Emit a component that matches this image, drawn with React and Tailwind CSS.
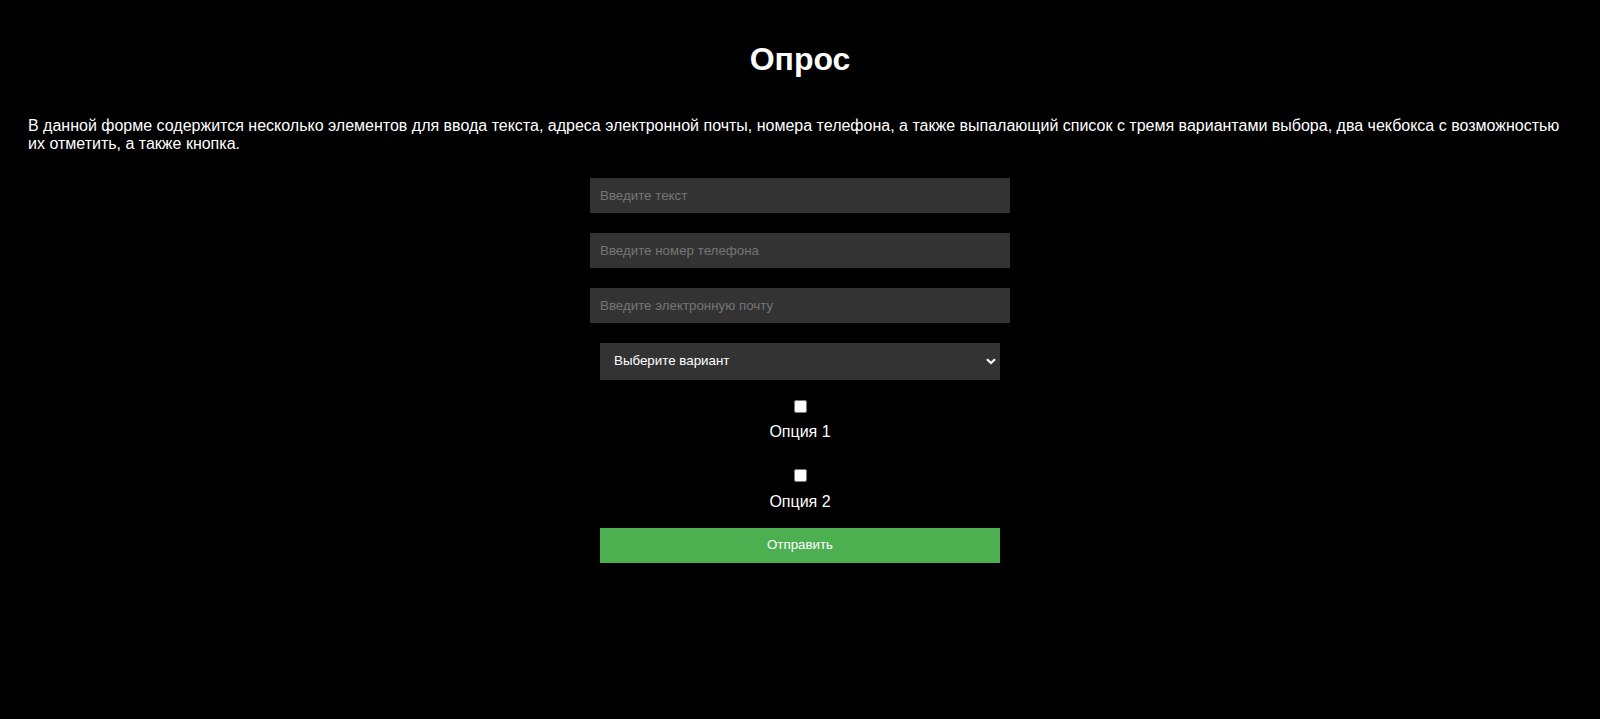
import React from "react";

export default function App() {
  return (
    <div className="min-h-[719px] bg-black text-white px-[28px] pt-[41px] font-['Liberation_Sans',Arial,sans-serif]">
      <h1 className="text-center text-[32px] leading-[37px] font-bold">Опрос</h1>
      <p className="mt-[39px] text-[16px] leading-[18.4px]">
        В данной форме содержится несколько элементов для ввода текста, адреса электронной почты, номера телефона, а также выпалающий список с тремя вариантами выбора, два чекбокса с возможностью их отметить, а также кнопка.
      </p>
      <form className="mx-auto mt-[24px] flex w-[420px] flex-col items-center" onSubmit={(e) => e.preventDefault()}>
        <input
          type="text"
          placeholder="Введите текст"
          className="block h-[35px] w-[420px] bg-[#333333] pl-[10px] text-[13.33px] text-white outline-none placeholder:text-[#757575]"
        />
        <input
          type="tel"
          placeholder="Введите номер телефона"
          className="mt-[20px] block h-[35px] w-[420px] bg-[#333333] pl-[10px] text-[13.33px] text-white outline-none placeholder:text-[#757575]"
        />
        <input
          type="email"
          placeholder="Введите электронную почту"
          className="mt-[20px] block h-[35px] w-[420px] bg-[#333333] pl-[10px] text-[13.33px] text-white outline-none placeholder:text-[#757575]"
        />
        <div className="relative mt-[20px] h-[37px] w-[400px]">
          <select
            defaultValue=""
            className="block h-[37px] w-[400px] appearance-none bg-[#333333] pl-[14px] text-[13.33px] text-white outline-none"
          >
            <option value="">Выберите вариант</option>
            <option value="1">Вариант 1</option>
            <option value="2">Вариант 2</option>
            <option value="3">Вариант 3</option>
          </select>
          <svg
            className="pointer-events-none absolute right-[4px] top-[15px]"
            width="10"
            height="7"
            viewBox="0 0 10 7"
          >
            <path d="M1 1.2 L5 5 L9 1.2" fill="none" stroke="white" strokeWidth="2.2" />
          </svg>
        </div>
        <input
          type="checkbox"
          className="mt-[20px] block h-[13px] w-[13px]"
        />
        <label className="mt-[10px] block text-[16px] leading-[18.4px]">Опция 1</label>
        <input
          type="checkbox"
          className="mt-[28px] block h-[13px] w-[13px]"
        />
        <label className="mt-[11px] block text-[16px] leading-[18.4px]">Опция 2</label>
        <button
          type="submit"
          className="mt-[16px] block h-[35px] w-[400px] bg-[#4caf50] text-[13.33px] text-white"
        >
          Отправить
        </button>
      </form>
    </div>
  );
}
